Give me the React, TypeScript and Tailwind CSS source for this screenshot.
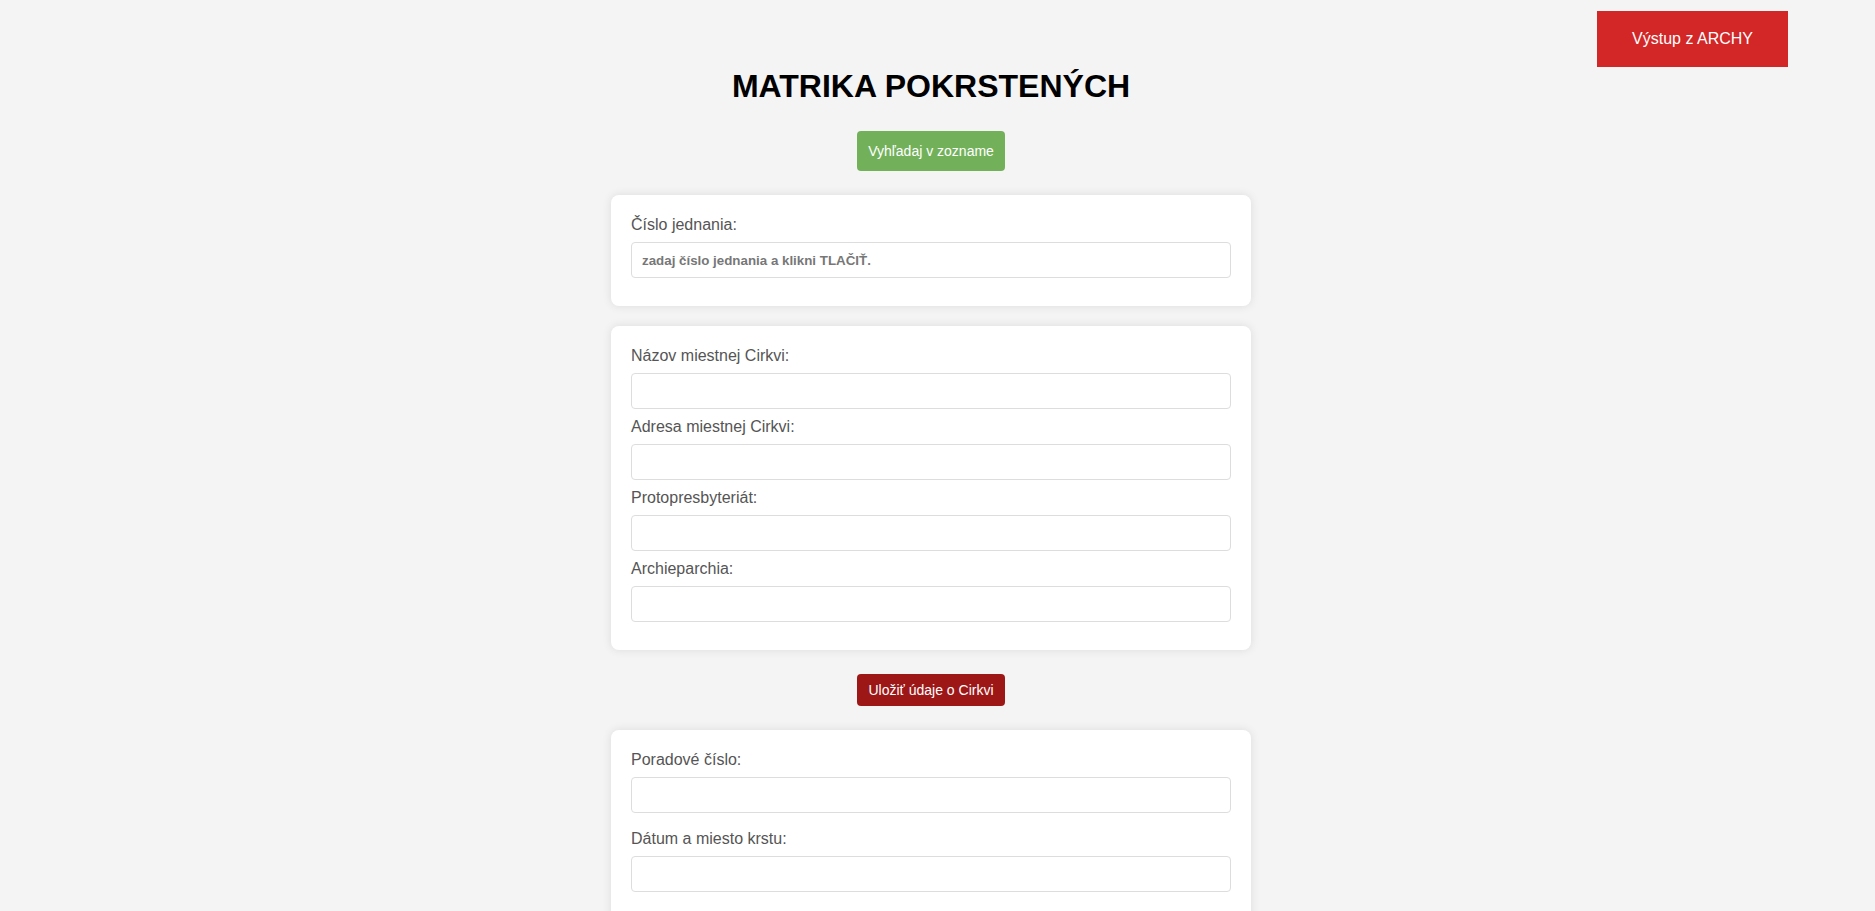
import React from "react"

const font = { fontFamily: '"Liberation Sans", Arial, sans-serif' }

function Field({ label, last = false }: { label: string; last?: boolean }) {
    return (
        <div className={last ? "mb-4" : "mb-2"}>
            <label className="block text-[16px] leading-[19px] text-[#555] mb-2">{label}</label>
            <input
                type="text"
                className="block w-full h-[36px] px-[10px] bg-white border border-[#ddd] rounded-[4px] text-[13.33px] text-[#333] outline-none"
            />
        </div>
    )
}

export default function App() {
    return (
        <div style={font} className="relative w-full h-[911px] overflow-hidden bg-[#f4f4f4]">
            {/* Exit button */}
            <button className="absolute top-[11px] right-[87px] w-[191px] h-[56px] bg-[#d32626] text-white text-[16px] flex items-center justify-center">
                Výstup z ARCHY
            </button>

            <div className="flex flex-col items-center pr-[13px]">
                <h1 className="mt-[68px] text-[32px] leading-[37px] font-bold text-black">MATRIKA POKRSTENÝCH</h1>

                <button className="mt-[26px] w-[148px] h-[40px] rounded-[4px] bg-[#72b15a] text-white text-[14px]">
                    Vyhľadaj v zozname
                </button>

                {/* Číslo jednania */}
                <div className="mt-[24px] w-[640px] bg-white rounded-[8px] shadow-[0_0_10px_rgba(0,0,0,0.1)] p-5">
                    <div className="mb-2">
                        <label className="block text-[16px] leading-[19px] text-[#555] mb-2">Číslo jednania:</label>
                        <input
                            type="text"
                            placeholder="zadaj číslo jednania a klikni TLAČIŤ."
                            className="block w-full h-[36px] px-[10px] bg-white border border-[#ddd] rounded-[4px] text-[13.33px] font-bold text-[#333] placeholder:text-[#777] outline-none"
                        />
                    </div>
                </div>

                {/* Údaje o Cirkvi */}
                <div className="mt-[20px] w-[640px] bg-white rounded-[8px] shadow-[0_0_10px_rgba(0,0,0,0.1)] p-5">
                    <Field label="Názov miestnej Cirkvi:" />
                    <Field label="Adresa miestnej Cirkvi:" />
                    <Field label="Protopresbyteriát:" />
                    <Field label="Archieparchia:" />
                </div>

                <button className="mt-[24px] w-[148px] h-[32px] rounded-[4px] bg-[#9e1717] text-white text-[14px]">
                    Uložiť údaje o Cirkvi
                </button>

                {/* Záznam */}
                <div className="mt-[24px] w-[640px] bg-white rounded-[8px] shadow-[0_0_10px_rgba(0,0,0,0.1)] p-5">
                    <Field label="Poradové číslo:" last />
                    <Field label="Dátum a miesto krstu:" last />
                    <Field label="Meno dieťaťa:" last />
                    <Field label="Priezvisko dieťaťa:" last />
                </div>
            </div>
        </div>
    )
}
